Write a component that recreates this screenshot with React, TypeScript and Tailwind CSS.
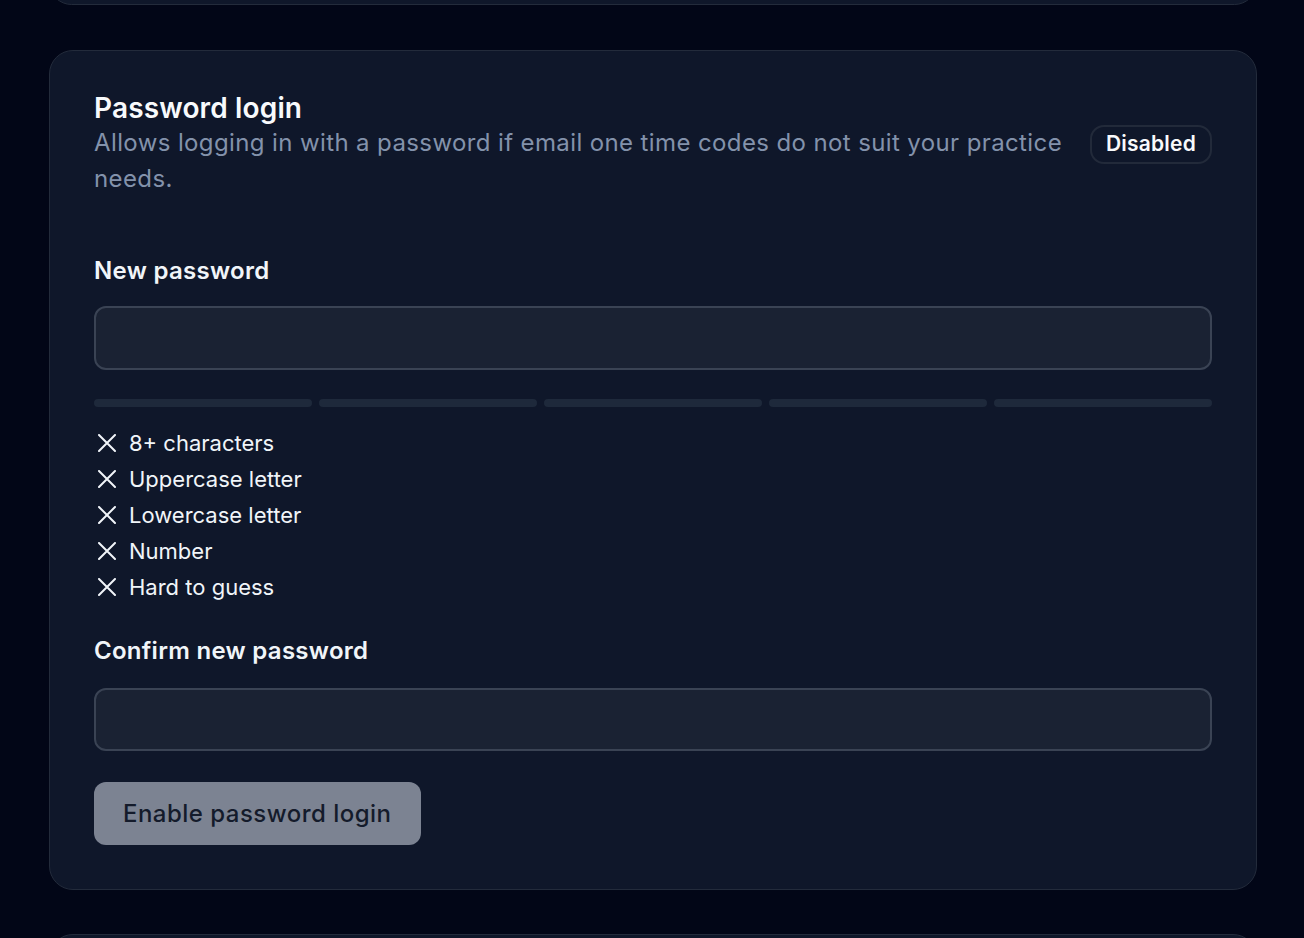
import { useState } from "react";

const RULES = ["8+ characters", "Uppercase letter", "Lowercase letter", "Number", "Hard to guess"];

function IconX({ className }: { className?: string }) {
  return (
    <svg className={className} viewBox="0 0 18 18" fill="none" stroke="currentColor" strokeWidth="2" strokeLinecap="round" aria-hidden>
      <path d="M1 1 17 17M17 1 1 17" />
    </svg>
  );
}

export default function App() {
  const [pw, setPw] = useState("");
  const [confirm, setConfirm] = useState("");

  return (
    <div
      className="h-[938px] overflow-hidden bg-[#020617] pl-[49px] pr-[47px]"
      style={{ fontFamily: "Inter, 'Noto Sans', sans-serif" }}
    >
      {/* previous card, only its bottom edge shows */}
      <div className="-mt-[40px] h-[45px] rounded-[24px] border border-[#232b3b] bg-[#0f172a]" />

      <section className="mt-[45px] rounded-[24px] border border-[#232b3b] bg-[#0f172a] px-[44px] pb-[44px] pt-10">
        <div className="flex items-center gap-6">
          <div className="flex-1">
            <h2 className="text-[28px] font-semibold leading-[34px] tracking-[0.005em] text-[#f8fafc]">Password login</h2>
            <p className="text-[24px] leading-[36px] tracking-[0.016em] text-[#8392ab]">
              Allows logging in with a password if email one time codes do not suit your practice needs.
            </p>
          </div>
          <span className="flex h-[39px] items-center rounded-[14px] border-2 border-[#222a3a] px-[14px] text-[21px] font-semibold tracking-[0.01em] text-[#f8fafc]">
            Disabled
          </span>
        </div>

        <label className="mt-[58px] block text-[24px] font-semibold leading-[32px] tracking-[0.012em] text-[#f1f5f9]">
          New password
        </label>
        <input
          type="password"
          value={pw}
          onChange={(e) => setPw(e.target.value)}
          className="mt-[19px] block h-16 w-full rounded-[12px] border-2 border-[#3a4354] bg-[#1a2233] px-4 text-[22px] text-white outline-none"
        />

        <div className="mt-[29px] grid grid-cols-5 gap-[7px]">
          {[0, 1, 2, 3, 4].map((i) => (
            <div key={i} className="h-2 rounded-full bg-[#1e293b]" />
          ))}
        </div>

        <ul className="mt-[18px]">
          {RULES.map((r) => (
            <li key={r} className="flex items-center gap-[13px] text-[22px] leading-[36px] text-[#f1f5f9]">
              <IconX className="ml-[4px] h-[18px] w-[18px] shrink-0" />
              {r}
            </li>
          ))}
        </ul>

        <label className="mt-[30px] block text-[24px] font-semibold leading-[32px] tracking-[0.012em] text-[#f1f5f9]">
          Confirm new password
        </label>
        <input
          type="password"
          value={confirm}
          onChange={(e) => setConfirm(e.target.value)}
          className="mt-[21px] block h-[63px] w-full rounded-[12px] border-2 border-[#3a4354] bg-[#1a2233] px-4 text-[22px] text-white outline-none"
        />

        <button
          type="button"
          disabled
          className="mt-[31px] flex h-[63px] items-center rounded-[12px] bg-[#7c8392] px-[29px] text-[24px] font-medium tracking-[0.02em] text-[#141b2b]"
        >
          Enable password login
        </button>
      </section>

      <div className="mt-[44px] h-[60px] rounded-[24px] border border-[#232b3b] bg-[#0f172a]" />
    </div>
  );
}
